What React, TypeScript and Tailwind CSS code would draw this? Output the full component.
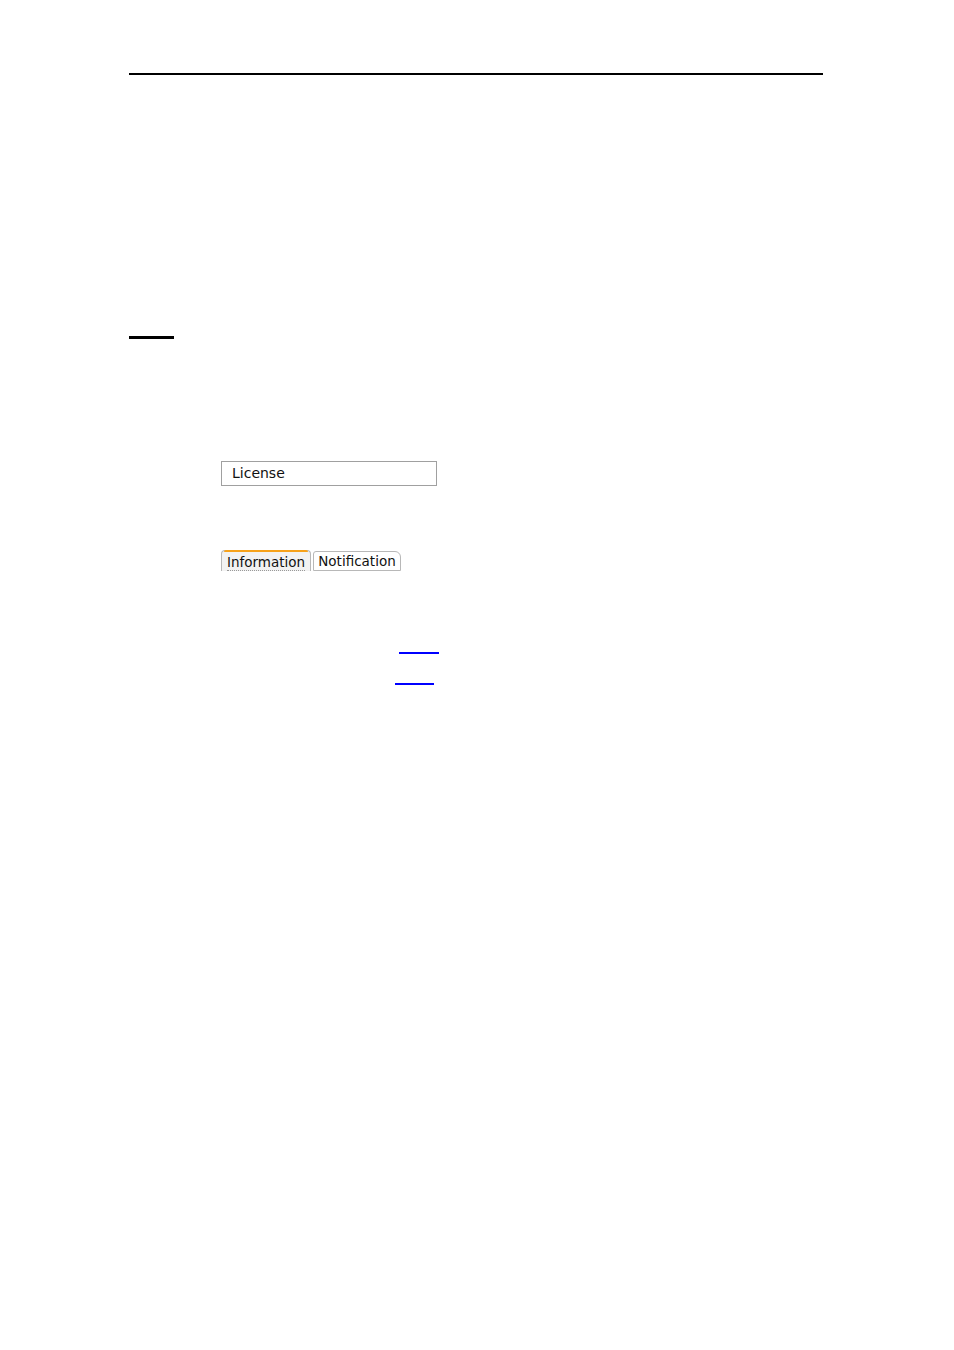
export default function App() {
  return (
    <div className="relative h-[1350px] w-[954px] bg-white font-['DejaVu_Sans',sans-serif]">
      <div className="ml-[129px] pt-[73px]">
        <div className="h-[2px] w-[694px] bg-black" />
        <div className="mt-[261px] h-[3px] w-[45px] bg-black" />

        <div className="ml-[92px] mt-[122px] flex h-[25px] w-[216px] items-center border border-[#a0a0a0] pl-[10px] text-[14px] text-[#111]">
          License
        </div>

        <div className="ml-[92px] mt-[64px] flex h-[21px] items-end">
          <div className="relative flex h-[21px] w-[90px] items-center justify-center rounded-t-[4px] border border-b-0 border-[#b8b8b8] bg-[#f2f2f2] text-[13.5px] text-[#111]">
            <div className="absolute -top-[1px] left-[2px] right-[2px] h-[2px] rounded-t bg-[#f7a21a]" />
            <span className="border-b border-dotted border-[#999] pt-[3px] leading-[15px]">Information</span>
          </div>
          <div className="ml-[2px] flex h-[20px] w-[88px] items-center justify-center rounded-tl-[3px] rounded-tr-[6px] border border-[#b8b8b8] bg-white text-[13.5px] text-[#111]">
            Notification
          </div>
        </div>

        <div className="ml-[270px] mt-[81px] h-[2px] w-[40px] border-t-2 border-[#0000ff]" />
        <div className="ml-[266px] mt-[29px] h-[2px] w-[39px] border-t-2 border-[#0000ff]" />
      </div>
    </div>
  );
}
